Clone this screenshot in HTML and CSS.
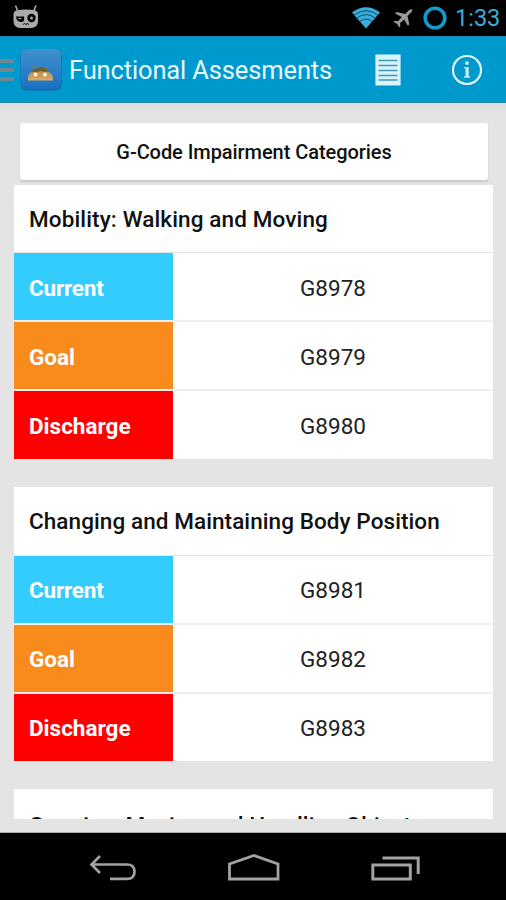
FILE: index.html
```
<!DOCTYPE html>
<html lang="en">
<head>
    <meta charset="UTF-8">
    <title>Functional Assesments</title>
    <link rel="stylesheet" href="styles.css">
</head>
<body>
<div class="status-bar">
    <svg class="cyan-icon" width="28" height="26" viewBox="0 0 28 26">
        <path d="M3.500 1.500l2.500 6M24 1.500l-2.500 6" stroke="#aaa" stroke-width="1.600"/>
        <path d="M1.500 10q0-2.500 2.500-3.500Q14 4.500 23.500 6.500 26 7.500 26 10v7q0 7-7 7h-10.500q-7 0-7-7z" fill="#aaa"/>
        <path d="M4 12.500h8q1 6-3 5.500-4.500-.5-5-5.500z" fill="#000"/>
        <path d="M6.500 14.500h3" stroke="#aaa" stroke-width="1.200"/>
        <circle cx="19.500" cy="14" r="4.200" fill="#000"/>
        <circle cx="19.500" cy="14" r="1.500" fill="#aaa"/>
        <path d="M11 20.500l1.500-1 1.500 1 1.500-1 1.500 1" stroke="#000" fill="none"/>
    </svg>
    <div class="status-right">
        <svg width="28" height="22" viewBox="0 0 28 22">
            <path d="M0 5.500Q14-5 28 5.500L14 21.500z" fill="#3aaedb"/>
            <path d="M2 8.200Q14-.8 26 8.200M4.500 11.200Q14 4 23.500 11.200M7.500 14.500Q14 9.500 20.500 14.500" fill="none" stroke="#0d4a60" stroke-width="1"/>
        </svg>
        <svg class="plane" width="21" height="20" viewBox="0 0 21 20">
            <path d="M19.800 .6q1 1-.4 2.500L15.500 7l1.800 8.300-1.500 1.400-3.700-6.300L8 14.200l.4 3.100-1.200 1.200-2-3.600L1.500 13l1.200-1.200 3.200.4 3.900-4.100L3 4.500l1.500-1.500 8.700 1.900 4-3.900q1.500-1.300 2.600-.4z" fill="#999"/>
        </svg>
        <svg class="battery" width="24" height="24" viewBox="0 0 24 24">
            <circle cx="12" cy="12" r="9.800" fill="none" stroke="#139bca" stroke-width="3.600"/>
        </svg>
        <span class="clock">1:33</span>
    </div>
</div>

<div class="action-bar">
    <div class="drawer"><i></i><i></i><i></i></div>
    <svg class="app-icon" width="42" height="43" viewBox="0 0 42 43">
        <defs>
            <linearGradient id="blue" x1="0" y1="0" x2="0" y2="1">
                <stop offset="0" stop-color="#3f91cb"/>
                <stop offset="1" stop-color="#1c70c2"/>
            </linearGradient>
            <linearGradient id="tan" x1="0" y1="0" x2="0" y2="1">
                <stop offset="0" stop-color="#a98445"/>
                <stop offset="1" stop-color="#dcab68"/>
            </linearGradient>
        </defs>
        <rect x=".5" y="1" width="41" height="41.500" rx="6" fill="#1668ad"/>
        <rect x="1" y="1" width="40" height="40" rx="5.500" fill="url(#blue)"/>
        <path d="M12.500 18l3 5M28.500 17l-3 5" stroke="#8f733b" stroke-width="1"/>
        <path d="M8 32.500q-.5-7 4.500-9 3-4.500 7.500-4 6-.5 7.500 4 6 2 5.500 9z" fill="url(#tan)"/>
        <path d="M11.500 23.500q4-4.500 9-4.500 5.500 0 8 4.500l-4 .5-4-1-5 1.500z" fill="#6d6132"/>
        <circle cx="15.500" cy="26.500" r="1.900" fill="#fff3da"/>
        <circle cx="25" cy="26.500" r="1.900" fill="#fff3da"/>
    </svg>
    <h1>Functional Assesments</h1>
    <svg class="list-icon" width="26" height="32" viewBox="0 0 26 32">
        <rect x=".4" y=".5" width="25.200" height="31" fill="#d9f3fb"/>
        <path d="M3.500 6.500h19M3.500 11.500h19M3.500 16.500h19M3.500 21.500h19M3.500 26h19" stroke="#4299b8" stroke-width="1.600"/>
    </svg>
    <svg class="info-icon" width="32" height="32" viewBox="0 0 32 32">
        <circle cx="16" cy="16" r="14" fill="none" stroke="#dff5fc" stroke-width="2.200"/>
        <path d="M14.300 7.500h3.400v3.200h-3.400zM13.200 13h4.500v9.300h1.400v1.500h-6v-1.500h1.400v-7.800h-1.300z" fill="#c5edfa"/>
    </svg>
</div>

<div class="content">
    <div class="scroll">
        <div class="button">G-Code Impairment Categories</div>

        <div class="card">
            <h2>Mobility: Walking and Moving</h2>
            <div class="row"><span class="label current">Current</span><span class="code">G8978</span></div>
            <div class="row"><span class="label goal">Goal</span><span class="code">G8979</span></div>
            <div class="row"><span class="label discharge">Discharge</span><span class="code">G8980</span></div>
        </div>

        <div class="card">
            <h2 class="body-position">Changing and Maintaining Body Position</h2>
            <div class="row"><span class="label current">Current</span><span class="code">G8981</span></div>
            <div class="row"><span class="label goal">Goal</span><span class="code">G8982</span></div>
            <div class="row"><span class="label discharge">Discharge</span><span class="code">G8983</span></div>
        </div>

        <div class="card">
            <h2 class="handling">Carrying, Moving and Handling Objects</h2>
        </div>
    </div>
</div>

<div class="nav-bar">
    <svg width="48" height="28" viewBox="0 0 48 28">
        <path d="M11 2L2.500 10.500 11 19M3 10.500h35q7.500 0 7.500 7.200t-7.500 7.200H21" fill="none" stroke="#a2a2a2" stroke-width="2.700"/>
    </svg>
    <svg width="54" height="28" viewBox="0 0 54 28">
        <path d="M2.500 25V10L27 1.500 51 10v15z" fill="none" stroke="#a2a2a2" stroke-width="2.800"/>
    </svg>
    <svg width="50" height="28" viewBox="0 0 50 28">
        <path d="M1.800 11h37.500v14H1.800zM11.500 4h35.700V20" fill="none" stroke="#a2a2a2" stroke-width="3"/>
    </svg>
</div>
</body>
</html>
```

FILE: styles.css
```
*
{
    margin: 0;
    padding: 0;
    box-sizing: border-box;
}
body
{
    width: 506px;
    height: 900px;
    display: flex;
    flex-direction: column;
    overflow: hidden;
    background: #000;
    font-family: Roboto, "Liberation Sans", sans-serif;
}
svg
{
    display: block;
    flex: none;
}

/*-----status bar----*/
.status-bar
{
    height: 36px;
    flex: none;
    display: flex;
    justify-content: space-between;
    padding: 4px 7px 0 12px;
}
.status-right
{
    display: flex;
    align-items: flex-start;
}
.status-right svg
{
    margin-top: 3px;
}
.status-right .plane
{
    margin: 5px 0 0 12px;
}
.status-right .battery
{
    margin: 2px 0 0 10px;
}
.clock
{
    width: 44px;
    margin-left: 8px;
    color: #3aaedb;
    font-size: 23.5px;
    line-height: 29px;
    white-space: nowrap;
}

/*-----action bar----*/
.action-bar
{
    height: 67px;
    flex: none;
    display: flex;
    align-items: center;
    background: #0099cd;
    border-top: 1px solid #1587b3;
    border-bottom: 1px solid #2386a8;
}
.drawer
{
    width: 14px;
    display: flex;
    flex-direction: column;
    gap: 5px;
}
.drawer i
{
    height: 4px;
    background: #6f8790;
}
.app-icon
{
    margin-left: 6px;
}
.action-bar h1
{
    width: 270px;
    margin-left: 7px;
    color: #e6f8fe;
    font-size: 25.5px;
    font-weight: 400;
    line-height: 30px;
    letter-spacing: -.14px;
    white-space: nowrap;
}
.list-icon
{
    margin-left: 36px;
}
.info-icon
{
    margin-left: 50px;
}

/*-----content----*/
.content
{
    height: 730px;
    flex: none;
    padding: 0 13px 14px 14px;
    background: linear-gradient(#dcdcdc, #e4e4e4 10px);
    border-bottom: 1px solid #aaa;
}
.scroll
{
    height: 716px;
    padding-top: 20px;
    overflow: hidden;
}
.button
{
    height: 57px;
    margin: 0 5px 5px 6px;
    background: #fff;
    border-radius: 3px;
    box-shadow: 0 2px 2px #c8c8c8;
    color: #111;
    font-size: 20px;
    font-weight: 500;
    line-height: 58px;
    letter-spacing: -.06px;
    text-align: center;
}
.card
{
    margin-bottom: 28px;
    background: #fff;
}
.card h2
{
    height: 68px;
    padding-left: 15px;
    border-bottom: 1px solid #e2e2e2;
    color: #111;
    font-size: 22.5px;
    font-weight: 500;
    line-height: 69px;
    letter-spacing: .13px;
    white-space: nowrap;
}
.card .body-position
{
    height: 69px;
    letter-spacing: .08px;
}
.card .handling
{
    line-height: 72px;
    letter-spacing: .08px;
}
.row
{
    height: 69px;
    display: flex;
    border-bottom: 2px solid #eee;
    line-height: 70px;
    font-size: 22.5px;
}
.row:last-child
{
    height: 68px;
    border-bottom: 0;
}
.body-position ~ .row
{
    line-height: 68px;
}
.body-position ~ .row:last-child
{
    height: 67px;
}
.label
{
    width: 159px;
    padding-left: 15px;
    color: #fff;
    font-weight: 700;
}
.current
{
    background: #33ccff;
    letter-spacing: -.2px;
}
.goal
{
    background: #f98a1c;
}
.discharge
{
    background: #ff0000;
}
.code
{
    flex: 1;
    color: #222;
    text-align: center;
}

/*-----navigation bar----*/
.nav-bar
{
    height: 67px;
    flex: none;
    display: flex;
    align-items: center;
    justify-content: space-between;
    padding: 3px 85px 0 89px;
}
```
